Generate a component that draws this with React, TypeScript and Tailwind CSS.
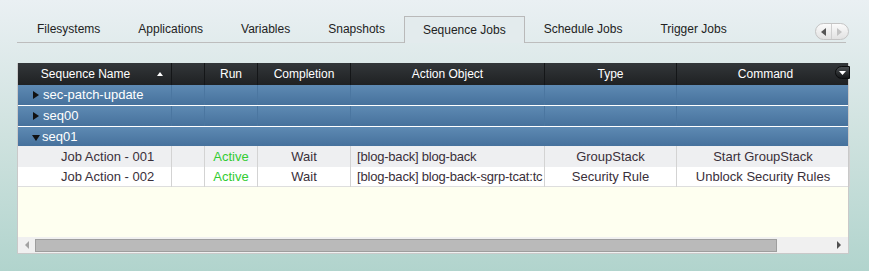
import React from "react";

const tabs = [
  "Filesystems",
  "Applications",
  "Variables",
  "Snapshots",
  "Sequence Jobs",
  "Schedule Jobs",
  "Trigger Jobs",
];

const cols = "grid grid-cols-[153px_33px_53px_93px_194px_132px_174px]";

const groups = [
  { name: "sec-patch-update", open: false },
  { name: "seq00", open: false },
  { name: "seq01", open: true },
];

const jobs = [
  {
    name: "Job Action - 001",
    run: "Active",
    completion: "Wait",
    object: "[blog-back] blog-back",
    type: "GroupStack",
    command: "Start GroupStack",
  },
  {
    name: "Job Action - 002",
    run: "Active",
    completion: "Wait",
    object: "[blog-back] blog-back-sgrp-tcat:tc",
    type: "Security Rule",
    command: "Unblock Security Rules",
  },
];

const App = () => {
  return (
    <div
      className="w-[869px] h-[271px] overflow-hidden bg-gradient-to-b from-[#eaf0f3] via-[#cfe2df] to-[#b1d4cd] text-[#333] pt-[16px]"
      style={{ fontFamily: '"Liberation Sans", Arial, sans-serif' }}
    >
      {/* ======= TABS ======= */}
      <div className="relative ml-[17px] w-[832px] h-[27px]">
        <div className="flex h-[27px] w-[829px]">
          <div className="w-[1px] border-b border-[#bdbdbd]"></div>
          {tabs.map((t) => {
            const active = t === "Sequence Jobs";
            return (
              <div
                key={t}
                className={
                  active
                    ? "px-[18px] h-[27px] flex items-center text-[12px] text-[#222] border border-b-0 border-[#b9b9b9] bg-[#e3ebed]"
                    : "px-[19px] h-[27px] flex items-center text-[12px] text-[#222] border-b border-[#bdbdbd]"
                }
              >
                {t}
              </div>
            );
          })}
          <div className="flex-1 border-b border-[#bdbdbd]"></div>
        </div>

        {/* scroll buttons */}
        <div className="absolute right-0 top-[7px] w-[34px] h-[17px] rounded-full border border-[#c4c4c4] bg-gradient-to-b from-[#fbfbfb] to-[#e2e2e2] flex">
          <div className="w-1/2 flex items-center justify-center border-r border-[#cfcfcf]">
            <svg width="6" height="8" viewBox="0 0 6 8">
              <path d="M5 0 L0 4 L5 8 Z" fill="#555" />
            </svg>
          </div>
          <div className="w-1/2 flex items-center justify-center">
            <svg width="6" height="8" viewBox="0 0 6 8">
              <path d="M0 0 L5 4 L0 8 Z" fill="#c3c3c3" />
            </svg>
          </div>
        </div>
      </div>

      {/* ======= TABLE ======= */}
      <div className="ml-[17px] mt-[20px] w-[832px] border-x border-b border-[#c9c9c9] bg-[#fefff0]">
        {/* Header */}
        <div
          className={`${cols} h-[22px] bg-gradient-to-b from-[#33373a] to-[#1f2123] text-white text-[12px]`}
        >
          <div className="relative flex items-center justify-center pr-[18px]">
            Sequence Name
            <svg
              className="absolute left-[139px] top-[9px]"
              width="6"
              height="4"
              viewBox="0 0 6 4"
            >
              <path d="M3 0 L6 4 L0 4 Z" fill="#fff" />
            </svg>
          </div>
          <div className="border-l border-[#141618]"></div>
          <div className="border-l border-[#141618] flex items-center justify-center">Run</div>
          <div className="border-l border-[#141618] flex items-center justify-center">
            Completion
          </div>
          <div className="border-l border-[#141618] flex items-center justify-center">
            Action Object
          </div>
          <div className="border-l border-[#141618] flex items-center justify-center">Type</div>
          <div className="relative border-l border-[#141618] flex items-center justify-center pl-[4px]">
            Command
            <div className="absolute right-0 top-[3px] w-[15px] h-[13px] rounded-l-full rounded-r-[3px] bg-gradient-to-b from-[#4a4e51] to-[#151719] border border-[#0c0d0e] flex items-center justify-center">
              <svg width="7" height="4" viewBox="0 0 7 4">
                <path d="M0 0 L7 0 L3.5 4 Z" fill="#fff" />
              </svg>
            </div>
          </div>
        </div>

        {/* Group rows */}
        {groups.map((g, i) => (
          <div
            key={g.name}
            className={`${cols} ${i < 2 ? "h-[21px] border-b border-white" : "h-[19px]"} bg-gradient-to-b from-[#5e8ab3] to-[#46719c] text-white text-[13px]`}
          >
            <div className="flex items-center pl-[14px]">
              {g.open ? (
                <svg width="8" height="6" viewBox="0 0 8 6" className="mr-[1px] mt-[2px]">
                  <path d="M0 0 L8 0 L4 6 Z" fill="#111" />
                </svg>
              ) : (
                <svg width="6" height="8" viewBox="0 0 6 8" className="mr-[3px] ml-[1px]">
                  <path d="M0 0 L6 4 L0 8 Z" fill="#111" />
                </svg>
              )}
              <span className="ml-[1px]">{g.name}</span>
            </div>
            {i < 2 && (
              <>
                <div className="border-l border-[#4b76a0]"></div>
                <div className="border-l border-[#4b76a0]"></div>
                <div className="border-l border-[#4b76a0]"></div>
                <div className="border-l border-[#4b76a0]"></div>
                <div className="border-l border-[#4b76a0]"></div>
                <div className="border-l border-[#4b76a0]"></div>
              </>
            )}
          </div>
        ))}

        {/* Job rows */}
        {jobs.map((j, i) => (
          <div
            key={j.name}
            className={`${cols} ${i === 0 ? "h-[21px] bg-[#eeeff1]" : "h-[20px] bg-white border-b border-[#dedede]"} text-[13px] text-[#3a2f3a]`}
          >
            <div className="flex items-center pl-[43px]">{j.name}</div>
            <div className="border-l border-[#d3d3d3]"></div>
            <div className="border-l border-[#d3d3d3] flex items-center justify-center text-[#33cc33]">
              {j.run}
            </div>
            <div className="border-l border-[#d3d3d3] flex items-center justify-center">
              {j.completion}
            </div>
            <div className="border-l border-[#d3d3d3] flex items-center pl-[6px] whitespace-nowrap tracking-[-0.2px]">
              {j.object}
            </div>
            <div className="border-l border-[#d3d3d3] flex items-center justify-center">
              {j.type}
            </div>
            <div className="border-l border-[#d3d3d3] border-r flex items-center justify-center">
              {j.command}
            </div>
          </div>
        ))}

        {/* Empty area */}
        <div className="h-[50px] bg-[#fefff0]"></div>

        {/* Horizontal scrollbar */}
        <div className="h-[16px] bg-[#f0f0f0] flex items-center">
          <div className="w-[17px] flex items-center justify-center">
            <svg width="4" height="8" viewBox="0 0 4 8">
              <path d="M4 0 L0 4 L4 8 Z" fill="#a3a3a3" />
            </svg>
          </div>
          <div className="w-[742px] h-[13px] bg-[#bababa] border border-[#9e9e9e]"></div>
          <div className="flex-1 flex items-center justify-end pr-[7px]">
            <svg width="4" height="8" viewBox="0 0 4 8">
              <path d="M0 0 L4 4 L0 8 Z" fill="#505050" />
            </svg>
          </div>
        </div>
      </div>
    </div>
  );
};

export default App;
